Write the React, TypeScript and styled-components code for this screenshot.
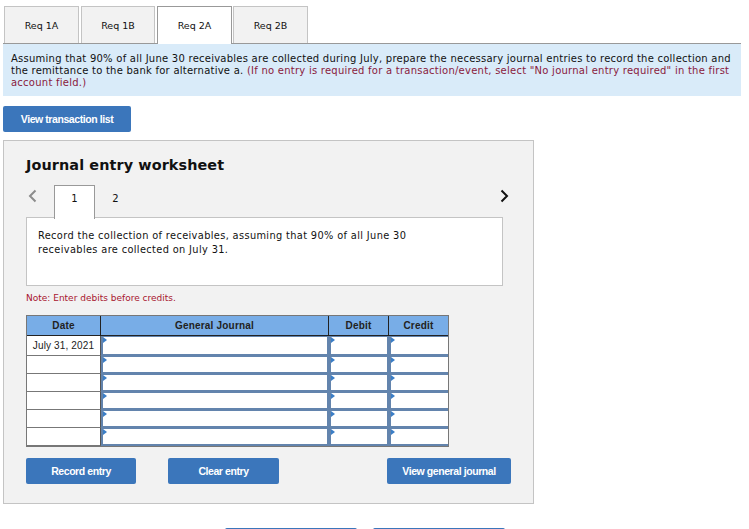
import styled, { createGlobalStyle } from 'styled-components';

const GlobalStyle = createGlobalStyle`
  html, body {
    margin: 0;
    padding: 0;
    height: 529px;
    overflow: hidden;
    background: #fff;
  }
`;

const Page = styled.div`
  width: 749px;
  height: 529px;
  overflow: hidden;
  padding: 6px 8px 0 3px;
  box-sizing: border-box;
  font-family: 'DejaVu Sans', Verdana, sans-serif;
  font-size: 10px;
  color: #111;
`;

const TabBar = styled.div`
  display: flex;
  gap: 2px;
  padding-left: 1px;
  height: 37px;
  border-bottom: 1px solid #999;
`;

const ReqTab = styled.div<{ $active?: boolean; $width: number }>`
  width: ${(p) => p.$width}px;
  height: 35px;
  padding-top: 1px;
  padding-bottom: ${(p) => (p.$active ? '1px' : '0')};
  margin-right: ${(p) => (p.$active ? '-1px' : '0')};
  display: flex;
  align-items: center;
  justify-content: center;
  font-size: 9.5px;
  background: ${(p) => (p.$active ? '#fff' : '#f2f2f2')};
  border: 1px solid ${(p) => (p.$active ? '#999' : '#c4c4c4')};
  border-bottom: none;
`;

const Banner = styled.div`
  background: #d9ebf9;
  height: 52px;
  box-sizing: border-box;
  padding: 9px 8px 0 8px;
  line-height: 12px;
  font-size: 10px;
  letter-spacing: 0.245px;
`;

const Hint = styled.span`
  color: #8a1a3c;
`;

const BlueButton = styled.button<{ $width: number }>`
  width: ${(p) => p.$width}px;
  height: 26px;
  border: none;
  border-radius: 2px;
  padding: 0 0 1px;
  background: #3b76bb;
  color: #fff;
  font-family: 'Liberation Sans', Arial, sans-serif;
  font-size: 10.5px;
  font-weight: 700;
  letter-spacing: -0.42px;
`;

const TopAction = styled.div`
  margin: 10px 0 8px;
  display: flex;
`;

const Panel = styled.div`
  width: 531px;
  height: 364px;
  box-sizing: border-box;
  background: #f2f2f2;
  border: 1px solid #c4c4c4;
  padding: 15px 22px 0;
`;

const Heading = styled.h2`
  margin: 0;
  font-size: 14.4px;
  line-height: 18px;
  font-weight: 700;
  color: #111;
  letter-spacing: 0.1px;
`;

const StepRow = styled.div`
  display: flex;
  align-items: flex-start;
  height: 33px;
  margin-top: 11px;
  position: relative;
  z-index: 1;
`;

const Chevron = styled.svg`
  display: block;
  flex: none;
`;

const StepTab = styled.div<{ $active?: boolean }>`
  width: 39px;
  height: 24px;
  padding-bottom: 9px;
  display: flex;
  align-items: center;
  justify-content: center;
  font-size: 10px;
  background: ${(p) => (p.$active ? '#fff' : 'transparent')};
  border: 1px solid ${(p) => (p.$active ? '#999' : 'transparent')};
  border-bottom: none;
`;

const PrevSlot = styled.div`
  width: 28px;
  padding: 4px 0 0 2px;
  box-sizing: border-box;
`;

const NextSlot = styled.div`
  margin-left: auto;
  padding: 4px 2px 0 0;
`;

const PromptBox = styled.div`
  width: 477px;
  height: 69px;
  box-sizing: border-box;
  background: #fff;
  border: 1px solid #c4c4c4;
  margin-top: -1px;
  padding: 11px 11px 0;
  line-height: 14px;
  font-size: 9.8px;
  letter-spacing: 0.36px;
`;

const Note = styled.div`
  margin-top: 6px;
  height: 12px;
  line-height: 12px;
  font-size: 9px;
  color: #a8152f;
`;

const Grid = styled.table`
  margin-top: 11px;
  width: 423px;
  table-layout: fixed;
  border-collapse: separate;
  border-spacing: 0;
  border: 1px solid #777;
  font-family: 'Liberation Sans', Arial, sans-serif;
  font-size: 10px;
`;

const HeadCell = styled.th<{ $width: number; $last?: boolean }>`
  width: ${(p) => p.$width}px;
  height: 19px;
  padding: 0;
  background: #78ade7;
  color: #222;
  font-weight: 700;
  font-size: 10px;
  letter-spacing: 0.2px;
  border-bottom: 1px solid #222;
  border-right: ${(p) => (p.$last ? 'none' : '1px solid #222')};
`;

const DateCell = styled.td<{ $first?: boolean }>`
  height: ${(p) => (p.$first ? '19px' : '17px')};
  padding: 0;
  background: #fff;
  text-align: center;
  font-size: 10px;
  letter-spacing: 0.15px;
  color: #222;
  border-right: 1px solid #555;
  border-bottom: 1px solid #777;
`;

const EntryCell = styled.td<{ $last?: boolean }>`
  padding: 0;
  position: relative;
  background: #fff;
  border: 2px solid #6384ad;
  border-top-width: 1px;
  border-left-width: 1px;
  border-right: ${(p) => (p.$last ? 'none' : '2px solid #6384ad')};
  box-shadow: inset 1px 0 0 #6384ad;
  &::before {
    content: '';
    position: absolute;
    left: 1px;
    top: 0;
    border-left: 4px solid #3b7ec6;
    border-top: 3px solid transparent;
    border-bottom: 3px solid transparent;
  }
`;

const ActionRow = styled.div`
  display: flex;
  margin-top: 11px;
  width: 485px;
`;

const ClearSlot = styled.div`
  margin-left: 32px;
  margin-right: auto;
`;

const BottomRow = styled.div`
  display: flex;
  justify-content: center;
  gap: 16px;
  margin-top: 24px;
  width: 724px;
`;

const rows = ['July 31, 2021', '', '', '', '', ''];

export default function App() {
  return (
    <>
      <GlobalStyle />
      <Page>
        <TabBar>
          <ReqTab $width={73}>Req 1A</ReqTab>
          <ReqTab $width={72}>Req 1B</ReqTab>
          <ReqTab $width={73} $active>Req 2A</ReqTab>
          <ReqTab $width={73}>Req 2B</ReqTab>
        </TabBar>
        <Banner>
          Assuming that 90% of all June 30 receivables are collected during July, prepare the necessary journal entries to record the collection and the remittance to the bank for alternative a.{' '}
          <Hint>(If no entry is required for a transaction/event, select "No journal entry required" in the first account field.)</Hint>
        </Banner>
        <TopAction>
          <BlueButton $width={128}>View transaction list</BlueButton>
        </TopAction>
        <Panel>
          <Heading>Journal entry worksheet</Heading>
          <StepRow>
            <PrevSlot>
              <Chevron width="9" height="14" viewBox="0 0 9 14">
                <path d="M7.5 1.5 L2 7 L7.5 12.5" fill="none" stroke="#8c8c8c" strokeWidth="2" />
              </Chevron>
            </PrevSlot>
            <StepTab $active>1</StepTab>
            <StepTab>2</StepTab>
            <NextSlot>
              <Chevron width="9" height="14" viewBox="0 0 9 14">
                <path d="M1.5 1.5 L7 7 L1.5 12.5" fill="none" stroke="#111" strokeWidth="2" />
              </Chevron>
            </NextSlot>
          </StepRow>
          <PromptBox>
            Record the collection of receivables, assuming that 90% of all June 30
            <br />
            receivables are collected on July 31.
          </PromptBox>
          <Note>Note: Enter debits before credits.</Note>
          <Grid>
            <thead>
              <tr>
                <HeadCell $width={73}>Date</HeadCell>
                <HeadCell $width={227}>General Journal</HeadCell>
                <HeadCell $width={59}>Debit</HeadCell>
                <HeadCell $width={59} $last>Credit</HeadCell>
              </tr>
            </thead>
            <tbody>
              {rows.map((date, i) => (
                <tr key={i}>
                  <DateCell $first={i === 0}>{date}</DateCell>
                  <EntryCell />
                  <EntryCell />
                  <EntryCell $last />
                </tr>
              ))}
            </tbody>
          </Grid>
          <ActionRow>
            <BlueButton $width={110}>Record entry</BlueButton>
            <ClearSlot>
              <BlueButton $width={111}>Clear entry</BlueButton>
            </ClearSlot>
            <BlueButton $width={124}>View general journal</BlueButton>
          </ActionRow>
        </Panel>
        <BottomRow>
          <BlueButton $width={132} />
          <BlueButton $width={132} />
        </BottomRow>
      </Page>
    </>
  );
}
